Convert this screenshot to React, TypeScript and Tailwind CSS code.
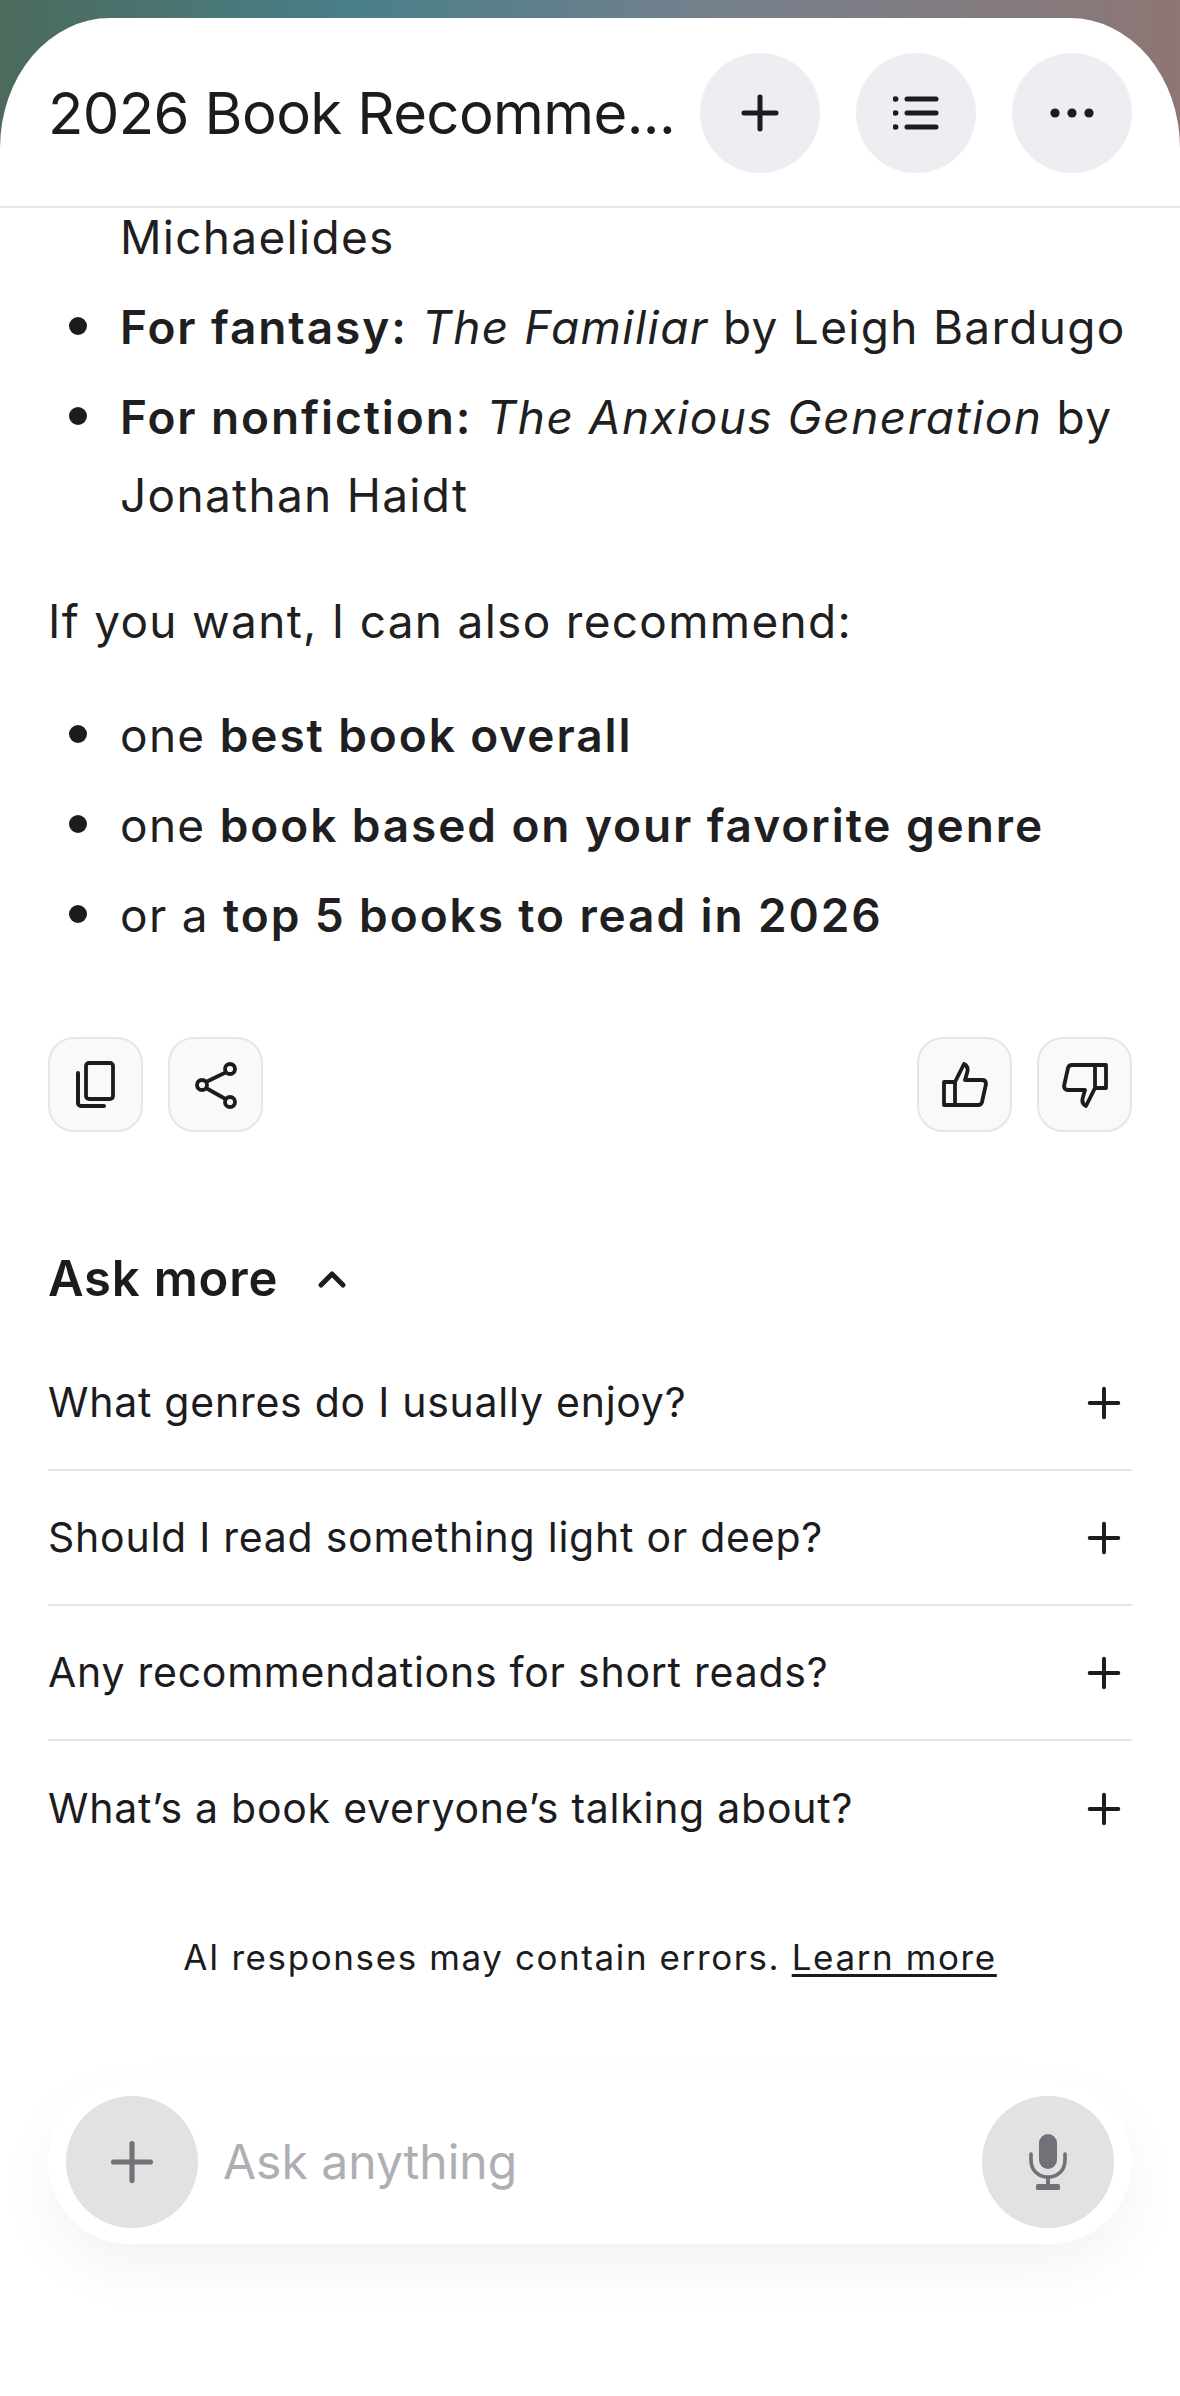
import React from "react";

const F = "[font-family:Inter,'Liberation_Sans',sans-serif]";

function Plus({ c = "#1c1c1e", s = 38, w = 5 }: { c?: string; s?: number; w?: number }) {
  return (
    <svg width={s} height={s} viewBox="0 0 38 38" fill="none" stroke={c} strokeWidth={w} strokeLinecap="round">
      <path d="M19 3v32M3 19h32" />
    </svg>
  );
}

function Round({ children }: { children: React.ReactNode }) {
  return <div className="w-[120px] h-[120px] rounded-full bg-[#eeeef2] flex items-center justify-center shrink-0">{children}</div>;
}

function Action({ children }: { children: React.ReactNode }) {
  return <div className="w-[95px] h-[95px] rounded-[26px] border-2 border-[#e6e6e9] bg-[#f9f9fb] flex items-center justify-center">{children}</div>;
}

function Item({ children, mb = "mb-[12px]" }: { children: React.ReactNode; mb?: string }) {
  return (
    <li className={`flex leading-[78px] ${mb}`}>
      <span className="w-[18px] h-[18px] rounded-full bg-[#1c1c1e] ml-[21px] mr-[33px] mt-[29px] shrink-0" />
      <div>{children}</div>
    </li>
  );
}

function Bold({ children }: { children: React.ReactNode }) {
  return <b className="font-semibold tracking-[1.9px]">{children}</b>;
}

function Row({ text, last }: { text: string; last?: boolean }) {
  return (
    <div className={`h-[135px] flex items-center justify-between pr-[11px] ${last ? "" : "border-b-2 border-[#e4e4e6]"}`}>
      <span className="text-[41px] tracking-[0.75px] text-[#1c1c1e]">{text}</span>
      <Plus s={34} w={4.4} />
    </div>
  );
}

export default function App() {
  return (
    <div className={`w-[1180px] h-[2396px] bg-white overflow-hidden text-[#1c1c1e] ${F}`}>
      <div className="bg-[linear-gradient(90deg,#4c6a5c_0%,#497f8a_30%,#76808c_62%,#8d7674_100%)] h-[208px]">
        <div className="h-[208px] pt-[18px]">
          <div className="h-[190px] bg-white rounded-tl-[110px_130px] rounded-tr-[110px_130px] border-b-2 border-[#e8e8ea] pl-[48px] pr-[48px] flex items-start gap-[20px]">
            <div className="mt-[60px] text-[58px] leading-[70px] tracking-[-0.6px] w-[632px] whitespace-nowrap">2026 Book Recomme...</div>
            <div className="mt-[35px] flex gap-[36px]">
              <Round><Plus /></Round>
              <Round>
                <svg width="46" height="36" viewBox="0 0 46 36" fill="none" stroke="#1c1c1e" strokeWidth="5" strokeLinecap="round">
                  <path d="M14 4h29M14 18h29M14 32h29" />
                  <path d="M2.5 4h.1M2.5 18h.1M2.5 32h.1" strokeWidth="5.6" />
                </svg>
              </Round>
              <Round>
                <svg width="44" height="10" viewBox="0 0 44 10" fill="#1c1c1e">
                  <circle cx="5" cy="5" r="4.6" /><circle cx="22" cy="5" r="4.6" /><circle cx="39" cy="5" r="4.6" />
                </svg>
              </Round>
            </div>
          </div>
        </div>
      </div>

      <div className="px-[48px] text-[46px] tracking-[1.3px] text-[#1f1f21]">
        <div className="pl-[72px] leading-[58px]">Michaelides</div>
        <ul className="mt-[22px]">
          <Item><Bold>For fantasy:</Bold> <i className="tracking-[1.45px]">The Familiar</i> by Leigh Bardugo</Item>
          <Item mb=""><Bold>For nonfiction:</Bold> <i className="tracking-[1.45px]">The Anxious Generation</i> by Jonathan Haidt</Item>
        </ul>
        <p className="mt-[48px] leading-[78px]">If you want, I can also recommend:</p>
        <ul className="mt-[36px]">
          <Item>one <Bold>best book overall</Bold></Item>
          <Item>one <Bold>book based on your favorite genre</Bold></Item>
          <Item>or a <Bold>top 5 books to read in 2026</Bold></Item>
        </ul>

        <div className="mt-[83px] flex justify-between">
          <div className="flex gap-[25px]">
            <Action>
              <svg width="42" height="48" viewBox="0 0 42 48" fill="none" stroke="#1c1c1e" strokeWidth="3.8" strokeLinejoin="round" strokeLinecap="round">
                <rect x="11" y="2" width="27" height="36" rx="3" />
                <path d="M3 12v30a3 3 0 0 0 3 3h23" strokeWidth="4" />
              </svg>
            </Action>
            <Action>
              <svg width="44" height="48" viewBox="0 0 44 48" fill="none" stroke="#1c1c1e" strokeWidth="3.8">
                <circle cx="36" cy="8" r="5" /><circle cx="8" cy="24" r="5" /><circle cx="36" cy="41" r="5" />
                <path d="M31.5 11.5L12 21M12 27l19.5 11" />
              </svg>
            </Action>
          </div>
          <div className="flex gap-[25px]">
            <Action>
              <svg width="46" height="46" viewBox="0 0 46 46" fill="none" stroke="#1c1c1e" strokeWidth="3.8" strokeLinejoin="round">
                <path d="M13 20v23M2 20h11l9-18c4 2 4 6 3 9l-2 7h17c3 0 4 2 4 4l-4 18c-.5 2-2 3-4 3H2z" />
              </svg>
            </Action>
            <Action>
              <svg width="46" height="46" viewBox="0 0 46 46" fill="none" stroke="#1c1c1e" strokeWidth="3.8" strokeLinejoin="round">
                <path d="M33 26V3M44 26H33L24 44c-4-2-4-6-3-9l2-7H6c-3 0-4-2-4-4L6 6c.5-2 2-3 4-3h34z" />
              </svg>
            </Action>
          </div>
        </div>

        <div className="mt-[111px] flex items-center gap-[38px] h-[72px]">
          <span className="text-[49px] font-semibold tracking-[0.8px] text-[#1c1c1e]">Ask more</span>
          <svg width="32" height="20" viewBox="0 0 32 20" fill="none" stroke="#1c1c1e" strokeWidth="5" strokeLinecap="round" strokeLinejoin="round">
            <path d="M5 16L16 5l11 11" />
          </svg>
        </div>

        <div className="mt-[21px]">
          <Row text="What genres do I usually enjoy?" />
          <Row text="Should I read something light or deep?" />
          <Row text="Any recommendations for short reads?" />
          <Row text="What’s a book everyone’s talking about?" last />
        </div>

        <div className="mt-[59px] text-center text-[35px] leading-[44px] tracking-[1.6px] text-[#1c1c1e]">
          AI responses may contain errors. <span className="underline underline-offset-4">Learn more</span>
        </div>

        <div className="mt-[101px] h-[164px] rounded-[82px] bg-white shadow-[0_24px_60px_rgba(0,0,0,0.05)] px-[18px] flex items-center justify-between">
          <div className="flex items-center gap-[25px]">
            <div className="w-[132px] h-[132px] rounded-full bg-[#e2e2e3] flex items-center justify-center">
              <Plus c="#717178" s={44} w={4.4} />
            </div>
            <span className="text-[48px] text-[#aeaeb4] tracking-[0]">Ask anything</span>
          </div>
          <div className="w-[132px] h-[132px] rounded-full bg-[#e2e2e3] flex items-center justify-center">
            <svg width="40" height="56" viewBox="0 0 40 56" fill="none">
              <rect x="11" y="0" width="18" height="35" rx="9" fill="#717178" />
              <path d="M3 20v6c0 10 7 17 17 17s17-7 17-17v-6" stroke="#717178" strokeWidth="3.6" strokeLinecap="round" />
              <path d="M20 43v9" stroke="#717178" strokeWidth="4" />
              <rect x="8" y="50" width="24" height="6" rx="1.5" fill="#717178" />
            </svg>
          </div>
        </div>
      </div>
    </div>
  );
}
